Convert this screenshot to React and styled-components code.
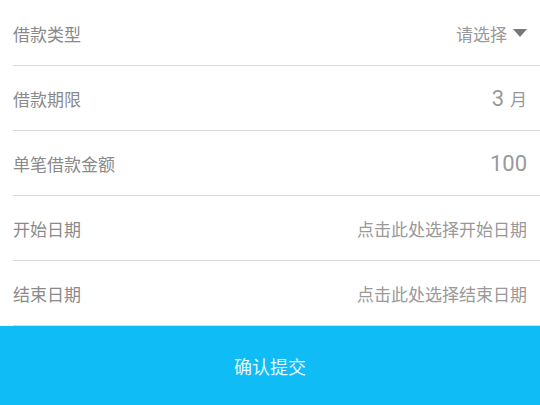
import React from "react";
import styled, { createGlobalStyle } from "styled-components";

const GlobalStyle = createGlobalStyle`
    html, body {
        margin: 0;
        padding: 0;
        background: #fff;
        font-family: Roboto, "Noto Sans CJK SC", sans-serif;
    }
`;

const Page = styled.div`
    width: 540px;
    height: 405px;
    display: flex;
    flex-direction: column;
    overflow: hidden;
`;

const List = styled.ul`
    list-style: none;
    margin: 0;
    padding: 1px 0 0 13px;
    flex: 1;
`;

const Row = styled.li`
    height: 64px;
    display: flex;
    align-items: center;
    justify-content: space-between;
    padding-right: 13px;
    border-bottom: 1px solid #d9d9d9;
`;

const Label = styled.span`
    font-size: 17px;
    color: #8a8a8a;
`;

const Value = styled.span`
    display: flex;
    align-items: center;
    font-size: ${props => props.big ? "22px" : "17px"};
    color: #999;
`;

const Unit = styled.span`
    font-size: 17px;
    margin-left: 6px;
`;

const Caret = styled.svg`
    width: 14px;
    height: 8px;
    margin-left: 6px;
    fill: #777;
`;

const SubmitButton = styled.button`
    height: 79px;
    flex-shrink: 0;
    border: 0;
    background: #0fbcf5;
    color: #e6f9ff;
    font-size: 18px;
    font-family: inherit;
    cursor: pointer;
`;

const rows = [
    { label: "借款类型", value: "请选择", select: true },
    { label: "借款期限", value: "3", unit: "月", big: true },
    { label: "单笔借款金额", value: "100", big: true },
    { label: "开始日期", value: "点击此处选择开始日期" },
    { label: "结束日期", value: "点击此处选择结束日期" },
];

const App = () => {
    return (
        <Page>
            <GlobalStyle />
            <List>
                {rows.map(row => (
                    <Row key={row.label}>
                        <Label>{row.label}</Label>
                        <Value big={row.big}>
                            {row.value}
                            {row.unit && <Unit>{row.unit}</Unit>}
                            {row.select &&
                                <Caret viewBox="0 0 14 8">
                                    <path d="M0 0 L14 0 L7 8 Z" />
                                </Caret>
                            }
                        </Value>
                    </Row>
                ))}
            </List>
            <SubmitButton>确认提交</SubmitButton>
        </Page>
    );
};

export default App;
